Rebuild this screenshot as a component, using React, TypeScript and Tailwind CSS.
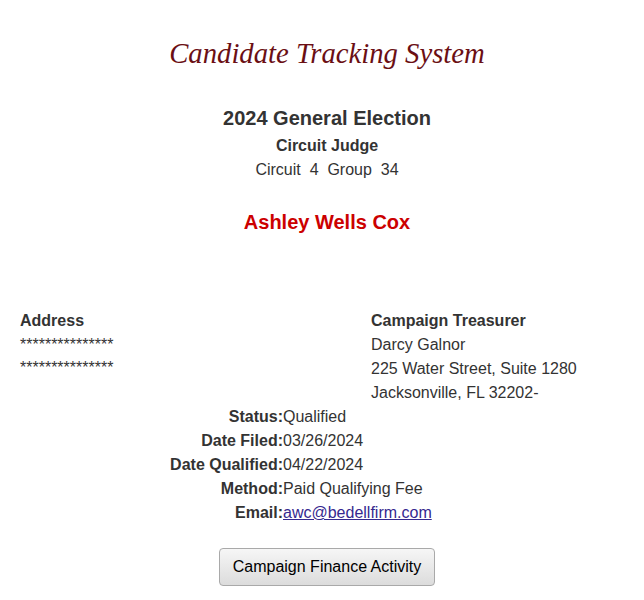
export default function App() {
  const details = [
    { label: "Status:", value: "Qualified" },
    { label: "Date Filed:", value: "03/26/2024" },
    { label: "Date Qualified:", value: "04/22/2024" },
    { label: "Method:", value: "Paid Qualifying Fee" },
  ];

  return (
    <div className="min-h-[600px] bg-white pl-[10px] pt-[34px] font-['Liberation_Sans',Arial,sans-serif] text-[16px] text-[#333]">
      <h1 className="text-center font-['Liberation_Serif','Times_New_Roman',serif] text-[28.7px] italic leading-[38px] text-[#6b0f14]">
        Candidate Tracking System
      </h1>

      <div className="mt-[34px] text-center">
        <h2 className="text-[20px] font-bold leading-[24px]">2024 General Election</h2>
        <p className="mt-[4px] font-bold leading-[24px]">Circuit Judge</p>
        <p className="leading-[24px]">Circuit&nbsp; 4&nbsp; Group&nbsp; 34</p>
        <p className="mt-[28px] text-[20px] font-bold leading-[24px] text-[#cc0000]">
          Ashley Wells Cox
        </p>
      </div>

      <div className="mt-[75px] grid grid-cols-[351px_1fr] pl-[10px]">
        <div>
          <p className="font-bold leading-[24px]">Address</p>
          <p className="leading-[23px]">{"*".repeat(15)}</p>
          <p className="leading-[23px]">{"*".repeat(15)}</p>
        </div>
        <div>
          <p className="font-bold leading-[24px]">Campaign Treasurer</p>
          <p className="leading-[24px]">Darcy Galnor</p>
          <p className="leading-[24px]">225 Water Street, Suite 1280</p>
          <p className="leading-[24px]">Jacksonville, FL 32202-</p>
        </div>
      </div>

      <div className="grid grid-cols-[273px_1fr] leading-[24px]">
        {details.map((d) => (
          <div key={d.label} className="contents">
            <span className="text-right font-bold">{d.label}</span>
            <span>{d.value}</span>
          </div>
        ))}
        <span className="text-right font-bold">Email:</span>
        <span>
          <a href="#" className="text-[#35288f] underline">
            awc@bedellfirm.com
          </a>
        </span>
      </div>

      <div className="mt-[23px] flex justify-center">
        <button className="h-[38px] w-[216px] rounded-[4px] border border-[#a9a9a9] bg-gradient-to-b from-[#f6f6f6] to-[#dcdcdc] text-[16px] text-black">
          Campaign Finance Activity
        </button>
      </div>
    </div>
  );
}
